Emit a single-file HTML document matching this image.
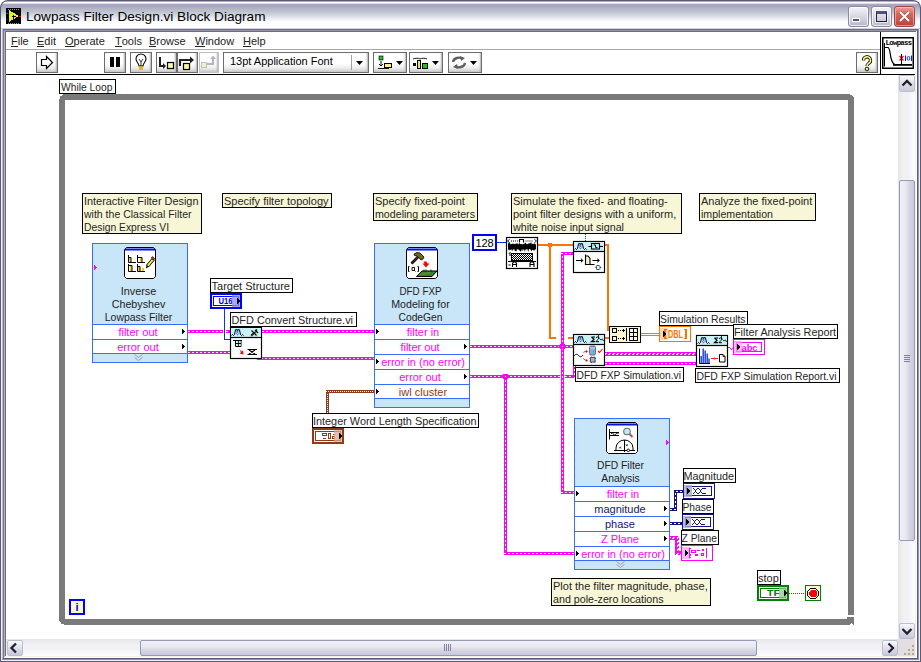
<!DOCTYPE html>
<html><head><meta charset="utf-8">
<style>
*{margin:0;padding:0;box-sizing:border-box}
html,body{width:921px;height:662px;overflow:hidden;background:#fff;font-family:"Liberation Sans",sans-serif}
.a{position:absolute}
#title{left:0;top:0;width:921px;height:28px;border-radius:8px 8px 0 0;border:1px solid #5a5a78;border-bottom:0;background:linear-gradient(to bottom,#b4acc4 0px,#b4acc4 1px,#ffffff 1px,#ffffff 2px,#dcdce6 2.5px,#b0a8c0 3.5px,#a8a4bc 4.5px,#a8a8c0 5.5px,#b0b0c4 7px,#b8bcc8 9px,#c0c4d0 11px,#ccd0d8 13px,#d8dce4 15px,#e8e8f0 17px,#f4f4f8 19px,#ffffff 21px,#ffffff 27px)}
.menu{top:35px;font-size:11px;color:#222;line-height:13px;white-space:nowrap}
.menu u{text-decoration:none;display:inline-block;border-bottom:1px solid #222;line-height:10px}
.tb{position:absolute;top:52px;height:21px;border:1px solid #6c6c6c;background:linear-gradient(to bottom,#fff 0,#fff 55%,#ececec 80%,#c8c8c8 100%);box-shadow:inset -2px 0 2px -1px #b0b0b0}
.sbtn{position:absolute;border:1px solid #b8c0d8;border-radius:2px;background:linear-gradient(to bottom,#fafafe 0,#e4e4ec 40%,#c8c8d8 100%)}
</style></head><body>
<div class="a" style="left:0;top:0;width:921px;height:662px;background:#fff"></div>
<div class="a" id="title"></div>
<!-- frame left -->
<div class="a" style="left:0;top:7px;width:1px;height:655px;background:#5a5a78"></div>
<div class="a" style="left:1px;top:28px;width:2px;height:633px;background:#f0f0f4"></div>
<div class="a" style="left:2px;top:28px;width:1px;height:632px;background:#b8b8c8"></div>
<div class="a" style="left:3px;top:29px;width:1px;height:630px;background:#7a7a98"></div>
<div class="a" style="left:4px;top:30px;width:1px;height:628px;background:#b0b0c4"></div>
<div class="a" style="left:5px;top:31px;width:1px;height:626px;background:#786c5c"></div>
<!-- frame right -->
<div class="a" style="left:920px;top:7px;width:1px;height:655px;background:#5a5a78"></div>
<div class="a" style="left:919px;top:28px;width:1px;height:633px;background:#f0f0f4"></div>
<div class="a" style="left:918px;top:28px;width:1px;height:632px;background:#9898b0"></div>
<div class="a" style="left:917px;top:29px;width:1px;height:630px;background:#5a5a78"></div>
<div class="a" style="left:916px;top:30px;width:1px;height:628px;background:#ffffff"></div>
<div class="a" style="left:915px;top:31px;width:1px;height:626px;background:#f4f0e8"></div>
<!-- frame top (below title) -->
<div class="a" style="left:1px;top:28px;width:919px;height:1px;background:#d0d0dc"></div>
<div class="a" style="left:3px;top:29px;width:915px;height:1px;background:#6c6c8c"></div>
<div class="a" style="left:4px;top:30px;width:913px;height:1px;background:#9494a8"></div>
<div class="a" style="left:5px;top:31px;width:911px;height:1px;background:#786c5c"></div>
<!-- frame bottom -->
<div class="a" style="left:0;top:661px;width:921px;height:1px;background:#5a5a78"></div>
<div class="a" style="left:1px;top:660px;width:919px;height:1px;background:#f0f0f4"></div>
<div class="a" style="left:2px;top:659px;width:917px;height:1px;background:#9090a8"></div>
<div class="a" style="left:3px;top:658px;width:915px;height:1px;background:#5a5a78"></div>
<div class="a" style="left:4px;top:657px;width:913px;height:1px;background:#ffffff"></div>
<div class="a" style="left:5px;top:656px;width:911px;height:1px;background:#f4f0e8"></div>

<!-- title icon + text -->
<svg class="a" style="left:6px;top:8px" width="16" height="16" viewBox="0 0 16 16" shape-rendering="crispEdges">
<rect x="0" y="0" width="15" height="16" fill="#000"/>
<path d="M2 1h11M2 15h11" stroke="#fff" stroke-width="0.6" stroke-dasharray="1 1"/>
<polygon points="3,2 13,8 3,14" fill="#f0f020"/>
<path d="M5.5 8.5h4M7.5 6.5v4" stroke="#000" stroke-width="1"/>
<rect x="0" y="5" width="2" height="1" fill="#f00"/><rect x="0" y="11" width="2" height="1" fill="#00f"/><rect x="13" y="8" width="2" height="1" fill="#f00"/>
</svg>
<div class="a" style="left:26px;top:9px;font-size:13.6px;line-height:16px;color:#000;letter-spacing:0;white-space:nowrap">Lowpass Filter Design.vi Block Diagram</div>
<!-- title buttons -->
<div class="a" style="left:848px;top:6px;width:21px;height:21px;border:1px solid #8a8aa4;border-radius:3px;background:linear-gradient(#f4f4fa,#e0e0ea 35%,#c8c8d8 75%,#b4b8cc);box-shadow:inset 0 0 0 1px rgba(255,255,255,0.7)"></div>
<div class="a" style="left:852px;top:18px;width:8px;height:4px;background:#50507a;border:1px solid #fff;box-sizing:border-box;outline:0"></div>
<div class="a" style="left:871px;top:6px;width:21px;height:21px;border:1px solid #8a8aa4;border-radius:3px;background:linear-gradient(#f4f4fa,#e0e0ea 35%,#c8c8d8 75%,#b4b8cc);box-shadow:inset 0 0 0 1px rgba(255,255,255,0.7)"></div>
<div class="a" style="left:876px;top:11px;width:11px;height:11px;border:1px solid #202030;border-top:3px solid #50507a;box-shadow:0 0 0 1px rgba(255,255,255,0.6)"></div>
<div class="a" style="left:894px;top:6px;width:21px;height:21px;border:1px solid #a04848;border-radius:3px;background:linear-gradient(#f0a098,#d86a60 35%,#c85048 75%,#b84038);box-shadow:inset 0 0 0 1px rgba(255,220,200,0.5)"></div>
<svg class="a" style="left:894px;top:6px" width="21" height="21"><path d="M6 6L15 15M15 6L6 15" stroke="#803030" stroke-width="3.2" opacity="0.5"/><path d="M6 6L15 15M15 6L6 15" stroke="#fff" stroke-width="2"/></svg>

<!-- menu -->
<div class="a menu" style="left:11px"><u>F</u>ile</div>
<div class="a menu" style="left:37px"><u>E</u>dit</div>
<div class="a menu" style="left:65px"><u>O</u>perate</div>
<div class="a menu" style="left:115px"><u>T</u>ools</div>
<div class="a menu" style="left:149px"><u>B</u>rowse</div>
<div class="a menu" style="left:195px"><u>W</u>indow</div>
<div class="a menu" style="left:243px"><u>H</u>elp</div>
<div class="a" style="left:6px;top:49px;width:874px;height:1px;background:#a8a8a8"></div>
<div class="a" style="left:880px;top:32px;width:1px;height:43px;background:#000"></div>
<div class="a" style="left:6px;top:74px;width:909px;height:1px;background:#000"></div>

<!-- toolbar -->
<div class="tb" style="left:36px;width:22px"></div>
<svg class="a" style="left:36px;top:52px" width="22" height="21"><path d="M5.5 7.5H10.5V4.5L16.5 10.5L10.5 16.5V13.5H5.5Z" fill="#fff" stroke="#000" stroke-width="1.2"/></svg>
<div class="tb" style="left:104px;width:22px"></div>
<div class="a" style="left:110px;top:57px;width:4px;height:10px;background:#000"></div>
<div class="a" style="left:116px;top:57px;width:4px;height:10px;background:#000"></div>
<div class="tb" style="left:130px;width:22px"></div>
<svg class="a" style="left:130px;top:52px" width="22" height="21"><path d="M9 14C9 11 6 10 6 7A5 5 0 0 1 16 7C16 10 13 11 13 14Z" fill="#fff" stroke="#000" stroke-width="1.1"/><path d="M9 7l2 3 2-3M11 10v4" fill="none" stroke="#000" stroke-width="0.8"/><path d="M9 15h4M9 17h4" stroke="#e0a000" stroke-width="1.3"/></svg>
<div class="tb" style="left:156px;width:21px"></div>
<svg class="a" style="left:156px;top:52px" width="21" height="21"><path d="M4 5V14H8" fill="none" stroke="#202020" stroke-width="2"/><path d="M7 11l3 3-3 3z" fill="#202020"/><rect x="11.5" y="10.5" width="6" height="6" fill="#f8f8a0" stroke="#000" stroke-width="1.2"/></svg>
<div class="tb" style="left:177px;width:21px"></div>
<svg class="a" style="left:177px;top:52px" width="21" height="21"><path d="M3 14V8H14" fill="none" stroke="#202020" stroke-width="2.2"/><path d="M13 4.5l4 3.5-4 3.5z" fill="#202020"/><rect x="6.5" y="11.5" width="6" height="6" fill="#f8f8a0" stroke="#000" stroke-width="1.2"/></svg>
<div class="tb" style="left:199px;width:20px;border-color:#c0c0c0"></div>
<svg class="a" style="left:199px;top:52px" width="20" height="21"><rect x="2.5" y="10.5" width="5" height="5" fill="#f0f0d0" stroke="#c0c0c0"/><path d="M8 12h6V6" fill="none" stroke="#b0b4c8" stroke-width="2"/><path d="M11 7l3-3.5 3 3.5z" fill="#b0b4c8"/></svg>
<div class="tb" style="left:223px;width:146px"></div>
<div class="a" style="left:230px;top:55px;font-size:11px;line-height:13px;color:#000;white-space:nowrap">13pt Application Font</div>
<div class="a" style="left:351px;top:55px;width:1px;height:15px;background:#a0a0a0"></div>
<svg class="a" style="left:353px;top:52px" width="14" height="21"><path d="M3 9h7l-3.5 4z" fill="#000"/></svg>
<div class="tb" style="left:373px;width:34px"></div>
<svg class="a" style="left:373px;top:52px" width="34" height="21"><rect x="6" y="4" width="4" height="4" fill="#20c020" stroke="#000" stroke-width="0.6"/><path d="M8 9v5M6 12l2 2 2-2M5 16.5h11" stroke="#000" stroke-width="0.9" fill="none" stroke-dasharray="0"/><rect x="11.5" y="11.5" width="7" height="4" fill="#f8f080" stroke="#000"/><path d="M23 9h7l-3.5 4z" fill="#000"/></svg>
<div class="tb" style="left:409px;width:34px"></div>
<svg class="a" style="left:409px;top:52px" width="34" height="21"><path d="M4 7c2-1 6-1 7 0c1-1 5-1 7 0" fill="none" stroke="#000" stroke-width="0.9"/><rect x="4" y="11" width="3" height="3" fill="#000"/><rect x="8.5" y="8.5" width="3" height="8" fill="#f0e060" stroke="#000"/><rect x="13.5" y="11.5" width="5" height="5" fill="#20c020" stroke="#000"/><path d="M23 9h7l-3.5 4z" fill="#000"/></svg>
<div class="tb" style="left:448px;width:34px"></div>
<svg class="a" style="left:448px;top:52px" width="34" height="21"><path d="M5 10a6 5 0 0 1 10-3M17 11a6 5 0 0 1-10 3" fill="none" stroke="#606060" stroke-width="2.4"/><path d="M12 4l5 2-4 3zM10 17l-5-2 4-3z" fill="#606060"/><path d="M22 9h7l-3.5 4z" fill="#000"/></svg>
<div class="tb" style="left:856px;width:22px"></div>
<svg class="a" style="left:856px;top:52px" width="22" height="21"><path d="M7.5 8.5a3.5 3.5 0 1 1 5 3c-1 .6-1.5 1-1.5 2.5" fill="none" stroke="#000" stroke-width="3.2"/><path d="M7.5 8.5a3.5 3.5 0 1 1 5 3c-1 .6-1.5 1-1.5 2.5" fill="none" stroke="#f8f080" stroke-width="1.6"/><circle cx="11" cy="17" r="1.8" fill="#f8f080" stroke="#000" stroke-width="0.9"/></svg>
<!-- VI icon -->
<svg class="a" style="left:882px;top:37px" width="32" height="32"><rect x="0.75" y="0.75" width="30.5" height="30.5" fill="#fff" stroke="#000" stroke-width="1.5"/><text x="3.5" y="8" font-size="6.5" font-weight="bold" font-family="Liberation Mono" letter-spacing="-0.6" textLength="26" lengthAdjust="spacingAndGlyphs">Lowpass</text><path d="M2.5 6V29.5" stroke="#000" stroke-width="1"/><path d="M2.5 10.5H6C8 11 8 17 9 21C10 25 11 27 13 27.5H30" fill="none" stroke="#000" stroke-width="1.2"/><path d="M11 28H30" stroke="#000" stroke-width="1.6"/><path d="M17.5 19L21.5 23.5M21.5 19L17.5 23.5" stroke="#f00" stroke-width="1.2"/><path d="M19.5 17V28" stroke="#000" stroke-width="1"/><path d="M23.5 18.5V24M29.5 18.5V24" stroke="#0020ff" stroke-width="1"/><rect x="25.3" y="19.5" width="2.4" height="3.6" rx="1" fill="none" stroke="#0020ff" stroke-width="0.9"/></svg>

<div class="a" style="left:6px;top:75px;width:892px;height:564px;overflow:hidden;background:#fff"><svg width="921" height="662" style="position:absolute;left:-6px;top:-75px" font-family="Liberation Sans" shape-rendering="crispEdges"><defs><pattern id="arrh" x="0" y="0" width="4" height="4" patternUnits="userSpaceOnUse"><rect width="4" height="4" fill="#ff00ff"/><rect x="1" y="1" width="2" height="1" fill="#fff"/><rect x="0" y="2" width="2" height="1" fill="#fff"/></pattern><pattern id="chk" x="0" y="0" width="2" height="2" patternUnits="userSpaceOnUse"><rect width="2" height="2" fill="#fff"/><rect width="1" height="1" fill="#000"/><rect x="1" y="1" width="1" height="1" fill="#000"/></pattern><pattern id="arrv" x="0" y="0" width="4" height="4" patternUnits="userSpaceOnUse"><rect width="4" height="4" fill="#ff00ff"/><rect x="1" y="1" width="1" height="2" fill="#fff"/><rect x="2" y="0" width="1" height="2" fill="#fff"/></pattern></defs>
<path d="M63 94H850V95H852V96H853V97H854V615H848V100H65V619H847V617H854V625H853L851.5 622.5L850 625H64V624H61V622H60V621H59V99H60V96H62V95H63Z" fill="#7a7a7a"/>
<rect x="59.5" y="79.5" width="56" height="14" fill="#fff" stroke="#000" stroke-width="1"/>
<text x="61" y="91" fill="#262626" text-anchor="start" font-size="11" font-weight="normal" textLength="51.5" lengthAdjust="spacingAndGlyphs">While Loop</text>
<rect x="69" y="599" width="16" height="16" fill="#0000ff"/>
<rect x="71" y="601" width="12" height="12" fill="#fcf8c8"/>
<text x="77" y="611" fill="#0000ff" text-anchor="middle" font-size="11" font-weight="bold" >i</text>
<rect x="82.5" y="193.5" width="119" height="40" fill="#f7f6d6" stroke="#000" stroke-width="1"/>
<text x="84" y="205" fill="#262626" text-anchor="start" font-size="11" font-weight="normal" textLength="114.5" lengthAdjust="spacingAndGlyphs">Interactive Filter Design</text>
<text x="84" y="218" fill="#262626" text-anchor="start" font-size="11" font-weight="normal" textLength="107.5" lengthAdjust="spacingAndGlyphs">with the Classical Filter</text>
<text x="84" y="231" fill="#262626" text-anchor="start" font-size="11" font-weight="normal" textLength="85" lengthAdjust="spacingAndGlyphs">Design Express VI</text>
<rect x="222.5" y="193.5" width="109" height="14" fill="#f7f6d6" stroke="#000" stroke-width="1"/>
<text x="224" y="205" fill="#262626" text-anchor="start" font-size="11" font-weight="normal" >Specify filter topology</text>
<rect x="373.5" y="193.5" width="104" height="27" fill="#f7f6d6" stroke="#000" stroke-width="1"/>
<text x="375" y="205" fill="#262626" text-anchor="start" font-size="11" font-weight="normal" >Specify fixed-point</text>
<text x="375" y="218" fill="#262626" text-anchor="start" font-size="11" font-weight="normal" textLength="100" lengthAdjust="spacingAndGlyphs">modeling parameters</text>
<rect x="511.5" y="193.5" width="170" height="40" fill="#f7f6d6" stroke="#000" stroke-width="1"/>
<text x="513" y="205" fill="#262626" text-anchor="start" font-size="11" font-weight="normal" >Simulate the fixed- and floating-</text>
<text x="513" y="218" fill="#262626" text-anchor="start" font-size="11" font-weight="normal" >point filter designs with a uniform,</text>
<text x="513" y="231" fill="#262626" text-anchor="start" font-size="11" font-weight="normal" textLength="111" lengthAdjust="spacingAndGlyphs">white noise input signal</text>
<rect x="699.5" y="193.5" width="116" height="27" fill="#f7f6d6" stroke="#000" stroke-width="1"/>
<text x="701" y="205" fill="#262626" text-anchor="start" font-size="11" font-weight="normal" >Analyze the fixed-point</text>
<text x="701" y="218" fill="#262626" text-anchor="start" font-size="11" font-weight="normal" textLength="72" lengthAdjust="spacingAndGlyphs">implementation</text>
<rect x="551.5" y="578.5" width="159" height="27" fill="#f7f6d6" stroke="#000" stroke-width="1"/>
<text x="553" y="590" fill="#262626" text-anchor="start" font-size="11" font-weight="normal" >Plot the filter magnitude, phase,</text>
<text x="553" y="603" fill="#262626" text-anchor="start" font-size="11" font-weight="normal" textLength="110.5" lengthAdjust="spacingAndGlyphs">and pole-zero locations</text>
<rect x="188" y="330" width="35" height="3" fill="#ff00ff"/>
<line x1="188" y1="331.5" x2="223" y2="331.5" stroke="#fff" stroke-width="1" stroke-dasharray="2 2" stroke-dashoffset="0"/>
<rect x="226" y="330" width="5" height="3" fill="#ff00ff"/>
<line x1="226" y1="331.5" x2="231" y2="331.5" stroke="#fff" stroke-width="1" stroke-dasharray="2 2" stroke-dashoffset="0"/>
<rect x="188" y="351" width="43" height="3" fill="#ff00ff"/>
<line x1="188" y1="352.5" x2="231" y2="352.5" stroke="#fff" stroke-width="1" stroke-dasharray="2 2" stroke-dashoffset="0"/>
<rect x="262" y="330" width="113" height="3" fill="#ff00ff"/>
<line x1="262" y1="331.5" x2="375" y2="331.5" stroke="#fff" stroke-width="1" stroke-dasharray="2 2" stroke-dashoffset="0"/>
<rect x="257" y="357" width="118" height="3" fill="#ff00ff"/>
<line x1="257" y1="358.5" x2="375" y2="358.5" stroke="#fff" stroke-width="1" stroke-dasharray="2 2" stroke-dashoffset="0"/>
<path d="M224.5 309V339.5H231" fill="none" stroke="#1030f0" stroke-width="1"/>
<rect x="326" y="390" width="3" height="23" fill="#8c3c1c"/>
<line x1="327.5" y1="390" x2="327.5" y2="413" stroke="#fff" stroke-width="1" stroke-dasharray="1 1" stroke-dashoffset="0"/>
<rect x="326" y="390" width="49" height="3" fill="#8c3c1c"/>
<line x1="326" y1="391.5" x2="375" y2="391.5" stroke="#fff" stroke-width="1" stroke-dasharray="1 1" stroke-dashoffset="0"/>
<rect x="470" y="345" width="104" height="3" fill="#ff00ff"/>
<line x1="470" y1="346.5" x2="574" y2="346.5" stroke="#fff" stroke-width="1" stroke-dasharray="2 2" stroke-dashoffset="0"/>
<rect x="561" y="252" width="3" height="242" fill="#ff00ff"/>
<line x1="562.5" y1="252" x2="562.5" y2="494" stroke="#fff" stroke-width="1" stroke-dasharray="2 2" stroke-dashoffset="0"/>
<rect x="561" y="252" width="13" height="3" fill="#ff00ff"/>
<line x1="561" y1="253.5" x2="574" y2="253.5" stroke="#fff" stroke-width="1" stroke-dasharray="2 2" stroke-dashoffset="0"/>
<rect x="561" y="491" width="14" height="3" fill="#ff00ff"/>
<line x1="561" y1="492.5" x2="575" y2="492.5" stroke="#fff" stroke-width="1" stroke-dasharray="2 2" stroke-dashoffset="0"/>
<rect x="470" y="375" width="90" height="3" fill="#ff00ff"/>
<line x1="470" y1="376.5" x2="560" y2="376.5" stroke="#fff" stroke-width="1" stroke-dasharray="2 2" stroke-dashoffset="0"/>
<rect x="565" y="375" width="11" height="3" fill="#ff00ff"/>
<line x1="565" y1="376.5" x2="576" y2="376.5" stroke="#fff" stroke-width="1" stroke-dasharray="2 2" stroke-dashoffset="0"/>
<rect x="573" y="365" width="3" height="13" fill="#ff00ff"/>
<line x1="574.5" y1="365" x2="574.5" y2="378" stroke="#fff" stroke-width="1" stroke-dasharray="2 2" stroke-dashoffset="0"/>
<rect x="504" y="376" width="3" height="179" fill="#ff00ff"/>
<line x1="505.5" y1="376" x2="505.5" y2="555" stroke="#fff" stroke-width="1" stroke-dasharray="2 2" stroke-dashoffset="0"/>
<rect x="504" y="552" width="71" height="3" fill="#ff00ff"/>
<line x1="504" y1="553.5" x2="575" y2="553.5" stroke="#fff" stroke-width="1" stroke-dasharray="2 2" stroke-dashoffset="0"/>
<circle cx="562.5" cy="346.5" r="3" fill="#ff00ff"/><circle cx="562.5" cy="346.5" r="1" fill="#fff"/>
<circle cx="505.5" cy="376.5" r="3" fill="#ff00ff"/><circle cx="505.5" cy="376.5" r="1" fill="#fff"/>
<line x1="497" y1="242.5" x2="507" y2="242.5" stroke="#1030f0"/>
<rect x="538" y="244" width="36" height="2" fill="#ff7400"/>
<rect x="549" y="244" width="2" height="95" fill="#ff7400"/>
<rect x="549" y="337" width="7" height="2" fill="#ff7400"/>
<rect x="568" y="337" width="6" height="2" fill="#ff7400"/>
<circle cx="550" cy="245" r="2.5" fill="#ff7400"/>
<rect x="605" y="244" width="4" height="2" fill="#ff7400"/>
<rect x="607" y="244" width="2" height="87" fill="#ff7400"/>
<rect x="607" y="329" width="3" height="2" fill="#ff7400"/>
<rect x="605" y="337" width="5" height="2" fill="#ff7400"/>
<rect x="641" y="333" width="18" height="1" fill="#ff7400"/>
<rect x="641" y="335" width="18" height="1" fill="#ff7400"/>
<rect x="605" y="352" width="92" height="4" fill="url(#arrh)"/>
<rect x="605" y="362" width="92" height="3" fill="#ff00ff"/>
<line x1="605" y1="363.5" x2="697" y2="363.5" stroke="#fff" stroke-width="1" stroke-dasharray="2 2" stroke-dashoffset="0"/>
<path d="M728 347.5h1.5c1 0 1 2 2 2s1-2 2-2" fill="none" stroke="#ff00ff"/>
<line x1="585.5" y1="234" x2="585.5" y2="241" stroke="#008000" stroke-dasharray="1 1"/>
<line x1="789" y1="593.5" x2="805" y2="593.5" stroke="#008000" stroke-dasharray="1 1"/>
<path d="M670 509.5H675.5V491.5H683" fill="none" stroke="#14147a" stroke-width="3"/>
<path d="M670 509.5H675.5V491.5H683" fill="none" stroke="#fff" stroke-width="1" stroke-dasharray="2 2"/>
<rect x="670" y="522" width="13" height="3" fill="#14147a"/>
<line x1="670" y1="523.5" x2="683" y2="523.5" stroke="#fff" stroke-width="1" stroke-dasharray="2 2" stroke-dashoffset="0"/>
<rect x="670" y="536" width="8" height="4" fill="url(#arrh)"/><rect x="675" y="536" width="4" height="19" fill="url(#arrv)"/><rect x="675" y="551" width="7" height="4" fill="url(#arrh)"/>
<rect x="92" y="243" width="96" height="120" fill="#c8e6f8"/>
<rect x="93" y="325" width="94" height="14" fill="#fff"/>
<rect x="93" y="340" width="94" height="13" fill="#fff"/>
<rect x="92.5" y="243.5" width="95" height="119" fill="none" stroke="#3a6cf4"/>
<line x1="92" y1="324.5" x2="188" y2="324.5" stroke="#3a6cf4"/>
<line x1="92" y1="339.5" x2="188" y2="339.5" stroke="#3a6cf4"/>
<line x1="92" y1="353.5" x2="188" y2="353.5" stroke="#3a6cf4"/>
<g transform="translate(124,247)" shape-rendering="geometricPrecision">
<path d="M2.5 0.5H29.5L31.5 2.5V29.5L29.5 31.5H2.5L0.5 29.5V2.5Z" fill="#fff" stroke="#000" stroke-width="1"/>
<rect x="1" y="1.5" width="30" height="2" fill="#0010e0"/>
<rect x="5" y="11" width="2" height="4" fill="#f8c428"/><path d="M4.5 8V15.5H12M4.5 10.5H7V15" fill="none" stroke="#000" stroke-width="1"/><rect x="16" y="11" width="2" height="4" fill="#f8c428"/><path d="M13.5 8V15.5H21M13.5 10.5H18V15" fill="none" stroke="#000" stroke-width="1"/><rect x="6" y="19" width="2" height="5" fill="#f8c428"/><path d="M4.5 17V24.5H12M4.5 18.5H8V24" fill="none" stroke="#000" stroke-width="1"/><rect x="14" y="20" width="2" height="4" fill="#f8c428"/><path d="M13.5 17V24.5H21M13.5 19.5H16V24" fill="none" stroke="#000" stroke-width="1"/><rect x="18" y="21" width="2" height="3" fill="#f8c428"/><path d="M22.5 18L28 11.5L30 13.5L24.5 20Z" fill="#e8e030" stroke="#000" stroke-width="0.9"/><path d="M27.2 10.8L28.6 9.6L30.8 11.8L29.6 13.2Z" fill="#f02828" stroke="#000" stroke-width="0.6"/><path d="M22.5 18L22 21.5L24.5 20Z" fill="#000"/>
</g>
<text x="138.5" y="295" fill="#222" text-anchor="middle" font-size="11" font-weight="normal" textLength="35.5" lengthAdjust="spacingAndGlyphs">Inverse</text>
<text x="138.5" y="308" fill="#222" text-anchor="middle" font-size="11" font-weight="normal" textLength="53.5" lengthAdjust="spacingAndGlyphs">Chebyshev</text>
<text x="138.5" y="321" fill="#222" text-anchor="middle" font-size="11" font-weight="normal" textLength="67.5" lengthAdjust="spacingAndGlyphs">Lowpass Filter</text>
<text x="138.0" y="336" fill="#ff00ff" text-anchor="middle" font-size="11" font-weight="normal" >filter out</text>
<polygon points="182,328.5 185,331.5 182,334.5" fill="#000"/>
<text x="138.0" y="351" fill="#ff00ff" text-anchor="middle" font-size="11" font-weight="normal" >error out</text>
<polygon points="182,343.5 185,346.5 182,349.5" fill="#000"/>
<path d="M134.5 354.5L138.5 357.5L142.5 354.5M134.5 357.5L138.5 360.5L142.5 357.5" fill="none" stroke="#98a0b0" stroke-width="1" shape-rendering="geometricPrecision"/>
<polygon points="94,264.5 97,267.5 94,270.5" fill="#ff00ff"/>
<rect x="374" y="243" width="96" height="165" fill="#c8e6f8"/>
<rect x="375" y="325" width="94" height="14" fill="#fff"/>
<rect x="375" y="340" width="94" height="14" fill="#fff"/>
<rect x="375" y="355" width="94" height="14" fill="#fff"/>
<rect x="375" y="370" width="94" height="14" fill="#fff"/>
<rect x="375" y="385" width="94" height="13" fill="#fff"/>
<rect x="374.5" y="243.5" width="95" height="164" fill="none" stroke="#3a6cf4"/>
<line x1="374" y1="324.5" x2="470" y2="324.5" stroke="#3a6cf4"/>
<line x1="374" y1="339.5" x2="470" y2="339.5" stroke="#3a6cf4"/>
<line x1="374" y1="354.5" x2="470" y2="354.5" stroke="#3a6cf4"/>
<line x1="374" y1="369.5" x2="470" y2="369.5" stroke="#3a6cf4"/>
<line x1="374" y1="384.5" x2="470" y2="384.5" stroke="#3a6cf4"/>
<line x1="374" y1="398.5" x2="470" y2="398.5" stroke="#3a6cf4"/>
<g transform="translate(406,247)" shape-rendering="geometricPrecision">
<path d="M2.5 0.5H29.5L31.5 2.5V29.5L29.5 31.5H2.5L0.5 29.5V2.5Z" fill="#fff" stroke="#000" stroke-width="1"/>
<rect x="1" y="1.5" width="30" height="2" fill="#0010e0"/>
<path d="M5.5 16.5L12.5 9.5" stroke="#000" stroke-width="2.6"/><path d="M5.5 16.5L12.5 9.5" stroke="#802020" stroke-width="1"/><path d="M8 7L11 5.5L14 6L18 10L17 12L15 13L13 11L11 9L8.5 8.5Z" fill="#6c6818" stroke="#000" stroke-width="0.8"/><path d="M3.5 19.5h-1v5h1M11.5 19.5h1v5h-1" fill="none" stroke="#000" stroke-width="1"/><path d="M6 20.5h2.5v3h-2.5zM8 23l1.5 1.5" fill="none" stroke="#000" stroke-width="0.9"/><path d="M17.5 14.5h3l1 2h2l-3.5 4l-3.5-4h2z" fill="#f00"/><path d="M10.5 29.5L16 24H31L26 29.5Z" fill="#2a8a2a" stroke="#000" stroke-width="1"/><path d="M14 27.5c2-1 3 0 5-1s3 0 5-1M17 25.5l2 2M22 25l2 2" fill="none" stroke="#b07020" stroke-width="0.9"/><path d="M18 22.5v1.5M20 22.5v1.5M25 22.5v1.5" stroke="#000" stroke-width="0.8"/>
</g>
<text x="420.5" y="295" fill="#222" text-anchor="middle" font-size="11" font-weight="normal" textLength="42" lengthAdjust="spacingAndGlyphs">DFD FXP</text>
<text x="420.5" y="308" fill="#222" text-anchor="middle" font-size="11" font-weight="normal" textLength="58.5" lengthAdjust="spacingAndGlyphs">Modeling for</text>
<text x="420.5" y="321" fill="#222" text-anchor="middle" font-size="11" font-weight="normal" textLength="44" lengthAdjust="spacingAndGlyphs">CodeGen</text>
<text x="423.0" y="336" fill="#ff00ff" text-anchor="middle" font-size="11" font-weight="normal" >filter in</text>
<polygon points="376,328.5 379,331.5 376,334.5" fill="#000"/>
<text x="420.0" y="351" fill="#ff00ff" text-anchor="middle" font-size="11" font-weight="normal" >filter out</text>
<polygon points="464,343.5 467,346.5 464,349.5" fill="#000"/>
<text x="423.0" y="366" fill="#ff00ff" text-anchor="middle" font-size="11" font-weight="normal" >error in (no error)</text>
<polygon points="376,358.5 379,361.5 376,364.5" fill="#000"/>
<text x="420.0" y="381" fill="#ff00ff" text-anchor="middle" font-size="11" font-weight="normal" >error out</text>
<polygon points="464,373.5 467,376.5 464,379.5" fill="#000"/>
<text x="423.0" y="396" fill="#8c3c1c" text-anchor="middle" font-size="11" font-weight="normal" >iwl cluster</text>
<polygon points="376,388.5 379,391.5 376,394.5" fill="#000"/>
<rect x="574" y="418" width="96" height="152" fill="#c8e6f8"/>
<rect x="575" y="487" width="94" height="14" fill="#fff"/>
<rect x="575" y="502" width="94" height="14" fill="#fff"/>
<rect x="575" y="517" width="94" height="14" fill="#fff"/>
<rect x="575" y="532" width="94" height="14" fill="#fff"/>
<rect x="575" y="547" width="94" height="13" fill="#fff"/>
<rect x="574.5" y="418.5" width="95" height="151" fill="none" stroke="#3a6cf4"/>
<line x1="574" y1="486.5" x2="670" y2="486.5" stroke="#3a6cf4"/>
<line x1="574" y1="501.5" x2="670" y2="501.5" stroke="#3a6cf4"/>
<line x1="574" y1="516.5" x2="670" y2="516.5" stroke="#3a6cf4"/>
<line x1="574" y1="531.5" x2="670" y2="531.5" stroke="#3a6cf4"/>
<line x1="574" y1="546.5" x2="670" y2="546.5" stroke="#3a6cf4"/>
<line x1="574" y1="560.5" x2="670" y2="560.5" stroke="#3a6cf4"/>
<g transform="translate(606,422)" shape-rendering="geometricPrecision">
<path d="M2.5 0.5H29.5L31.5 2.5V29.5L29.5 31.5H2.5L0.5 29.5V2.5Z" fill="#fff" stroke="#000" stroke-width="1"/>
<rect x="1" y="1.5" width="30" height="2" fill="#0010e0"/>
<path d="M3.5 7V17.5" stroke="#000" stroke-width="1"/><path d="M4 10.5H13M4 13.5H13" stroke="#000" stroke-width="1"/><path d="M5 12c1-1.5 2-1.5 2.5 0s1.5 1.5 2.5 0s1.5-1.5 2.5 0" fill="none" stroke="#000" stroke-width="0.9"/><circle cx="21" cy="9.5" r="3.3" fill="#b8f0f8" stroke="#707070" stroke-width="1.1"/><path d="M23.5 12L26.5 15" stroke="#c84848" stroke-width="2"/><path d="M8 28.5H29" stroke="#000" stroke-width="1"/><path d="M10 28.5V26A8.5 8 0 0 1 27 26V28.5" fill="none" stroke="#000" stroke-width="1"/><path d="M18.5 18V30" stroke="#000" stroke-width="1"/><circle cx="22.3" cy="28.3" r="1.3" fill="#fff" stroke="#000" stroke-width="0.9"/><path d="M13.3 24.8l1.6 1.6m0-1.6l-1.6 1.6M20 22.4l1.6 1.6m0-1.6l-1.6 1.6" stroke="#000" stroke-width="0.8"/>
</g>
<text x="620.5" y="469" fill="#222" text-anchor="middle" font-size="11" font-weight="normal" textLength="47" lengthAdjust="spacingAndGlyphs">DFD Filter</text>
<text x="620.5" y="482" fill="#222" text-anchor="middle" font-size="11" font-weight="normal" textLength="38.5" lengthAdjust="spacingAndGlyphs">Analysis</text>
<text x="623.0" y="498" fill="#ff00ff" text-anchor="middle" font-size="11" font-weight="normal" >filter in</text>
<polygon points="576,490.5 579,493.5 576,496.5" fill="#000"/>
<text x="620.0" y="513" fill="#14147a" text-anchor="middle" font-size="11" font-weight="normal" >magnitude</text>
<polygon points="664,505.5 667,508.5 664,511.5" fill="#000"/>
<text x="620.0" y="528" fill="#14147a" text-anchor="middle" font-size="11" font-weight="normal" >phase</text>
<polygon points="664,520.5 667,523.5 664,526.5" fill="#000"/>
<text x="620.0" y="543" fill="#ff00ff" text-anchor="middle" font-size="11" font-weight="normal" >Z Plane</text>
<polygon points="664,535.5 667,538.5 664,541.5" fill="#000"/>
<text x="623.0" y="558" fill="#ff00ff" text-anchor="middle" font-size="11" font-weight="normal" >error in (no error)</text>
<polygon points="576,550.5 579,553.5 576,556.5" fill="#000"/>
<path d="M616.5 561.5L620.5 564.5L624.5 561.5M616.5 564.5L620.5 567.5L624.5 564.5" fill="none" stroke="#98a0b0" stroke-width="1" shape-rendering="geometricPrecision"/>
<polygon points="666,439.5 669,442.5 666,445.5" fill="#ff00ff"/>
<g transform="translate(230,327)" shape-rendering="geometricPrecision">
<rect x="0.5" y="0.5" width="31" height="31" fill="#fff" stroke="#000" stroke-width="1.2"/>
<rect x="1" y="1" width="30" height="10" fill="#c8f2f6"/><line x1="1" y1="10.5" x2="31" y2="10.5" stroke="#000" stroke-width="1.2"/>
<path d="M1.5 8.5L2.5 7.5L3.5 8.5L4.5 7.5L5.5 3L6.5 2L7.5 3.5L8.5 2L9.5 3L10.5 7.5L11.5 8.5L12.5 7.5L13.5 8.5" fill="none" stroke="#000" stroke-width="1"/><path d="M6.2 4.5l1.3 1.3 1.3-1.3M6.2 6.5l1.3 1.3 1.3-1.3M6.5 3.5l1 1 1-1" stroke="#1838f0" stroke-width="0.9" fill="none"/><path d="M21.5 3.5l5 5M27 2.5l-1.5 1.5M21 8.5l2-2" stroke="#000" stroke-width="1.2"/><path d="M25 3l3 3M21.5 9l4-4" stroke="#000" stroke-width="1.3"/><path d="M21.3 9.2l2.5-2.5" stroke="#a04818" stroke-width="1"/><path d="M3 13.5H12M5.5 13.5V19.5H11V13.5M8.3 14V19.5M5.5 16.5H11" fill="none" stroke="#000" stroke-width="1"/><rect x="6.2" y="14.2" width="1.6" height="1.8" fill="#c0f0f0"/><rect x="9" y="14.2" width="1.6" height="1.8" fill="#c0f0f0"/><rect x="6.2" y="17" width="1.6" height="2" fill="#c0f0f0"/><rect x="9" y="17" width="1.6" height="2" fill="#c0f0f0"/><path d="M9 21.5L11.5 24.5L13 23.5L13.5 27.5L9.5 26.5L11 25.5Z" fill="#f00"/><path d="M17.5 22.5H27M17.5 27.5H27M19 23L25 27M25 23L19 27" fill="none" stroke="#000" stroke-width="1.1"/>
</g>
<g transform="translate(506,237)" shape-rendering="geometricPrecision">
<rect x="0.5" y="0.5" width="31" height="31" fill="#fff" stroke="#000" stroke-width="1.2"/>
<path d="M3.5 2.5l-2 1.5 2 1.5M28.5 2.5l2 1.5-2 1.5" stroke="#000" fill="none" stroke-width="0.9"/><path d="M5 4h7.5M19.5 4h7.5" stroke="#000" stroke-dasharray="1 1" stroke-width="1"/><path d="M13.5 5.5V2.5h4V5.5" fill="none" stroke="#000" stroke-width="1.1"/><polygon points="2.0,5.7 2.5,6.1 3.0,6.9 3.5,5.0 4.0,5.8 4.5,8.0 5.0,7.5 5.5,6.9 6.0,6.9 6.5,6.6 7.0,7.0 7.5,7.3 8.0,5.9 8.5,7.6 9.0,7.2 9.5,7.1 10.0,6.2 10.5,6.3 11.0,7.6 11.5,5.4 12.0,7.9 12.5,6.9 13.0,6.5 13.5,6.1 14.0,6.8 14.5,7.0 15.0,7.6 15.5,7.0 16.0,7.6 16.5,7.7 17.0,7.1 17.5,7.5 18.0,5.9 18.5,7.6 19.0,5.3 19.5,6.2 20.0,5.9 20.5,7.6 21.0,6.8 21.5,7.2 22.0,7.6 22.5,6.5 23.0,5.9 23.5,6.8 24.0,5.6 24.5,6.8 25.0,5.1 25.5,5.9 26.0,7.7 26.5,6.4 27.0,6.9 27.5,6.7 28.0,7.8 28.5,6.3 29.0,5.7 29.5,7.9 29.5,13.1 29.0,12.4 28.5,13.7 28.0,13.0 27.5,13.4 27.0,13.3 26.5,13.1 26.0,12.6 25.5,14.4 25.0,14.1 24.5,12.0 24.0,12.7 23.5,11.6 23.0,11.7 22.5,14.5 22.0,14.4 21.5,12.5 21.0,11.6 20.5,11.6 20.0,13.8 19.5,12.0 19.0,13.9 18.5,14.5 18.0,11.7 17.5,13.2 17.0,12.1 16.5,13.2 16.0,14.4 15.5,12.0 15.0,14.5 14.5,14.3 14.0,14.2 13.5,13.3 13.0,12.7 12.5,12.4 12.0,12.8 11.5,12.2 11.0,11.8 10.5,14.3 10.0,13.9 9.5,14.3 9.0,14.1 8.5,12.9 8.0,11.6 7.5,13.3 7.0,11.7 6.5,13.7 6.0,14.1 5.5,12.0 5.0,12.9 4.5,12.9 4.0,12.2 3.5,14.0 3.0,11.7 2.5,13.3 2.0,13.1" fill="#000"/><rect x="2" y="7.5" width="28" height="4.5" fill="#000"/><rect x="5.5" y="16.5" width="21" height="7" fill="url(#chk)" stroke="#000" shape-rendering="crispEdges"/><path d="M2 24.5H30" stroke="#000" stroke-width="1.1"/><path d="M3 16.5l1-1V19" fill="none" stroke="#000" stroke-width="1"/><path d="M2.5 28h2M6.5 30V26.5l1-1.5h2l1 1.5V30M6.5 27.5h4M24 30V26.5l1-1.5h2l1 1.5V30M24 27.5h4" fill="none" stroke="#000" stroke-width="1.1"/>
</g>
<g transform="translate(573,241)" shape-rendering="geometricPrecision">
<rect x="0.5" y="0.5" width="31" height="31" fill="#fff" stroke="#000" stroke-width="1.2"/>
<rect x="1" y="1" width="30" height="10" fill="#c8f2f6"/><line x1="1" y1="10.5" x2="31" y2="10.5" stroke="#000" stroke-width="1.2"/>
<path d="M1.5 8.5L2.5 7.5L3.5 8.5L4.5 7.5L5.5 3L6.5 2L7.5 3.5L8.5 2L9.5 3L10.5 7.5L11.5 8.5L12.5 7.5L13.5 8.5" fill="none" stroke="#000" stroke-width="1"/><path d="M6.2 4.5l1.3 1.3 1.3-1.3M6.2 6.5l1.3 1.3 1.3-1.3M6.5 3.5l1 1 1-1" stroke="#1838f0" stroke-width="0.9" fill="none"/><path d="M15.5 5.5h3M26.5 5.5h3.5" stroke="#000" stroke-width="1"/><rect x="18.5" y="2.5" width="8" height="5.5" fill="none" stroke="#000" stroke-width="1.1"/><path d="M20.5 4h2V6.5h2" fill="none" stroke="#000" stroke-width="0.9"/><path d="M12.5 13.5V23.5H17V17.5L15 15Z" fill="#f4f0c0"/><path d="M3 19.5h6M19.5 19.5h6" stroke="#000" stroke-width="1.1"/><path d="M8 17.5l2 2-2 2M24.5 17.5l2 2-2 2" fill="#000" stroke="#000" stroke-width="0.5"/><path d="M12.5 13.5V23.5H21.5M13 15H15L17 17.5V23" fill="none" stroke="#000" stroke-width="1.1"/><path d="M22 26.5l2-1.8v3.6zM28.5 26.5l-2-1.8v3.6z" fill="#2040f0"/><path d="M23.5 24.5h3M23.5 28.5h3" stroke="#2040f0" stroke-width="1"/>
</g>
<g transform="translate(573,334)" shape-rendering="geometricPrecision">
<rect x="0.5" y="0.5" width="31" height="31" fill="#fff" stroke="#000" stroke-width="1.2"/>
<rect x="1" y="1" width="30" height="10" fill="#c8f2f6"/><line x1="1" y1="10.5" x2="31" y2="10.5" stroke="#000" stroke-width="1.2"/>
<path d="M1.5 8.5L2.5 7.5L3.5 8.5L4.5 7.5L5.5 3L6.5 2L7.5 3.5L8.5 2L9.5 3L10.5 7.5L11.5 8.5L12.5 7.5L13.5 8.5" fill="none" stroke="#000" stroke-width="1"/><path d="M6.2 4.5l1.3 1.3 1.3-1.3M6.2 6.5l1.3 1.3 1.3-1.3M6.5 3.5l1 1 1-1" stroke="#1838f0" stroke-width="0.9" fill="none"/><path d="M18.5 3H22M18.5 3l2.5 2.3-2.5 2.4H22" fill="none" stroke="#000" stroke-width="1.2"/><path d="M23 4c0.5-1.5 3-1.5 3 0s-3 2.5-3 3.7H26" fill="none" stroke="#000" stroke-width="1"/><path d="M25.5 1V4M26.5 4.5l1.5 1.5 1.5-1 1 2" fill="none" stroke="#000" stroke-width="0.8"/><path d="M0.5 22.5c1.5-2 3-3 4.5-1.5s3 3 5 0" fill="none" stroke="#000" stroke-width="1"/><path d="M10.5 18.5c1-1 2-1 3-1M10.5 24.5c1 1 2 2 3 2" fill="none" stroke="#f00" stroke-width="1"/><path d="M13 16l2 1.5-2 1.5zM13 25l2 1.5-2 1.5z" fill="#f00"/><rect x="16.5" y="12" width="6" height="9" rx="1.5" fill="#90a8d8" stroke="#4050a0" stroke-width="0.8"/><path d="M17 13.5c1 1 4 1 5 0" fill="none" stroke="#e0e8ff" stroke-width="0.8"/><rect x="19.5" y="17" width="2" height="1.5" fill="#20e020"/><path d="M25 17l1.5 1.5 3-3.5" fill="none" stroke="#f00" stroke-width="1.1"/><rect x="17.5" y="23.5" width="4.5" height="4.5" fill="#b0b0b8" stroke="#505068" stroke-width="1"/><path d="M18.5 22.5v1M21 22.5v1M18.5 28v1M21 28v1M16.5 24.5h1M16.5 27h1M22 24.5h1M22 27h1" stroke="#505068" stroke-width="1"/>
</g>
<g transform="translate(696,335)" shape-rendering="geometricPrecision">
<rect x="0.5" y="0.5" width="31" height="31" fill="#fff" stroke="#000" stroke-width="1.2"/>
<rect x="1" y="1" width="30" height="10" fill="#c8f2f6"/><line x1="1" y1="10.5" x2="31" y2="10.5" stroke="#000" stroke-width="1.2"/>
<path d="M1.5 8.5L2.5 7.5L3.5 8.5L4.5 7.5L5.5 3L6.5 2L7.5 3.5L8.5 2L9.5 3L10.5 7.5L11.5 8.5L12.5 7.5L13.5 8.5" fill="none" stroke="#000" stroke-width="1"/><path d="M6.2 4.5l1.3 1.3 1.3-1.3M6.2 6.5l1.3 1.3 1.3-1.3M6.5 3.5l1 1 1-1" stroke="#1838f0" stroke-width="0.9" fill="none"/><path d="M18.5 3H22M18.5 3l2.5 2.3-2.5 2.4H22" fill="none" stroke="#000" stroke-width="1.2"/><path d="M23 4c0.5-1.5 3-1.5 3 0s-3 2.5-3 3.7H26" fill="none" stroke="#000" stroke-width="1"/><path d="M25.5 1V4M26.5 4.5l1.5 1.5 1.5-1 1 2" fill="none" stroke="#000" stroke-width="0.8"/><path d="M3.5 13.5V28.5H14" fill="none" stroke="#000" stroke-width="1"/><path d="M5.2 28V21M7.2 28V13.5M9.2 28V15.5M11.2 28V18.5M13 28V23.5" stroke="#2048e0" stroke-width="1.5"/><path d="M15 23.5h7" stroke="#f02020" stroke-width="1"/><circle cx="18.5" cy="23.5" r="1" fill="#f02020"/><path d="M23.5 19.5h3.5l2 2v5.5h-5.5z" fill="#fff" stroke="#000" stroke-width="1"/><path d="M27 19.5v2h2" fill="none" stroke="#000" stroke-width="0.8"/>
</g>
<rect x="609.5" y="326.5" width="31" height="16" fill="#f8f6d0" stroke="#000" stroke-width="1.2"/>
<rect x="612.5" y="328.5" width="4" height="4" fill="#f8f6d0" stroke="#000" stroke-width="1"/><rect x="612.5" y="336.5" width="4" height="4" fill="#f8f6d0" stroke="#000" stroke-width="1"/>
<path d="M618 330.5h1M620 330.5h1M618 338.5h1M620 338.5h1" stroke="#000"/><path d="M622 330.5h3M623.5 329v3M622 338.5h3M623.5 337v3" stroke="#000"/><path d="M627 328.5c-1 2-1 9 0 12" fill="none" stroke="#000" stroke-width="1"/><rect x="629.5" y="328.5" width="8" height="12" fill="#f8f6d0" stroke="#000" stroke-width="1.1"/><path d="M629 332.5h9M629 336.5h9M633.5 328v13" stroke="#000"/>
<rect x="210.5" y="278.5" width="82" height="14" fill="#fff" stroke="#000" stroke-width="1"/>
<text x="211.5" y="290" fill="#262626" text-anchor="start" font-size="11" font-weight="normal" textLength="78.5" lengthAdjust="spacingAndGlyphs">Target Structure</text>
<rect x="230.5" y="312.5" width="126" height="14" fill="#fff" stroke="#000" stroke-width="1"/>
<text x="231.5" y="324" fill="#262626" text-anchor="start" font-size="11" font-weight="normal" textLength="121.5" lengthAdjust="spacingAndGlyphs">DFD Convert Structure.vi</text>
<rect x="312.5" y="413.5" width="166" height="14" fill="#fff" stroke="#000" stroke-width="1"/>
<text x="313" y="425" fill="#262626" text-anchor="start" font-size="11" font-weight="normal" textLength="163.5" lengthAdjust="spacingAndGlyphs">Integer Word Length Specification</text>
<rect x="659.5" y="311.5" width="88" height="14" fill="#fff" stroke="#000" stroke-width="1"/>
<text x="660" y="323" fill="#262626" text-anchor="start" font-size="11" font-weight="normal" textLength="85.5" lengthAdjust="spacingAndGlyphs">Simulation Results</text>
<rect x="733.5" y="324.5" width="104" height="14" fill="#fff" stroke="#000" stroke-width="1"/>
<text x="734" y="336" fill="#262626" text-anchor="start" font-size="11" font-weight="normal" textLength="102" lengthAdjust="spacingAndGlyphs">Filter Analysis Report</text>
<rect x="575.5" y="367.5" width="108" height="14" fill="#fff" stroke="#000" stroke-width="1"/>
<text x="576.5" y="379" fill="#262626" text-anchor="start" font-size="11" font-weight="normal" textLength="104.5" lengthAdjust="spacingAndGlyphs">DFD FXP Simulation.vi</text>
<rect x="695.5" y="368.5" width="144" height="14" fill="#fff" stroke="#000" stroke-width="1"/>
<text x="696.5" y="380" fill="#262626" text-anchor="start" font-size="11" font-weight="normal" textLength="140" lengthAdjust="spacingAndGlyphs">DFD FXP Simulation Report.vi</text>
<rect x="683.5" y="468.5" width="52" height="14" fill="#fff" stroke="#000" stroke-width="1"/>
<text x="683.5" y="480" fill="#262626" text-anchor="start" font-size="11" font-weight="normal" textLength="50.5" lengthAdjust="spacingAndGlyphs">Magnitude</text>
<rect x="682.5" y="499.5" width="31" height="14" fill="#fff" stroke="#000" stroke-width="1"/>
<text x="682.5" y="511" fill="#262626" text-anchor="start" font-size="11" font-weight="normal" textLength="29" lengthAdjust="spacingAndGlyphs">Phase</text>
<rect x="681.5" y="530.5" width="37" height="14" fill="#fff" stroke="#000" stroke-width="1"/>
<text x="681.5" y="542" fill="#262626" text-anchor="start" font-size="11" font-weight="normal" textLength="35.5" lengthAdjust="spacingAndGlyphs">Z Plane</text>
<rect x="757.5" y="570.5" width="23" height="14" fill="#fff" stroke="#000" stroke-width="1"/>
<text x="758" y="582" fill="#262626" text-anchor="start" font-size="11" font-weight="normal" >stop</text>
<rect x="210" y="293" width="32" height="16" fill="#0000ff"/>
<rect x="212" y="295" width="28" height="12" fill="#fff"/>
<rect x="213.5" y="296.5" width="25" height="9" fill="#fff" stroke="#0000ff"/>
<text x="218.5" y="304" fill="#0000ff" text-anchor="start" font-size="9" font-weight="bold"  textLength="14" lengthAdjust="spacingAndGlyphs">U16</text>
<rect x="232" y="295" width="8" height="12" fill="#8890f0" opacity="0.75"/>
<polygon points="237,297.5 240.5,301 237,304.5" fill="#000"/>
<rect x="473" y="235" width="23" height="15" fill="#fff" stroke="#0000ff" stroke-width="2"/>
<text x="484.5" y="247" fill="#000" text-anchor="middle" font-size="11" font-weight="normal"  textLength="18">128</text>
<rect x="312" y="428" width="32" height="16" fill="#8c3c1c"/>
<rect x="314" y="430" width="28" height="12" fill="#fff"/>
<rect x="315.5" y="431.5" width="25" height="9" fill="#fff" stroke="#8c3c1c"/>
<path d="M322.5 433.5h4v2h-4zM323 438.5h3M328.5 433.5h2v5h-2zM332.5 434.5h2M332.5 436.5h2v2h-2z" fill="none" stroke="#8c3c1c" stroke-width="1"/>
<rect x="334" y="430" width="8" height="12" fill="#d8a898" opacity="0.75"/>
<polygon points="339,432.5 342.5,436 339,439.5" fill="#000"/>
<rect x="659.5" y="326.5" width="31" height="15" fill="#fff" stroke="#ff7400"/>
<rect x="660" y="328" width="8" height="12" fill="#f8d0a8" opacity="0.85"/>
<path d="M667 329.5h-2v9h2M684 329.5h2v9h-2" fill="none" stroke="#ff7400" stroke-width="1.4"/>
<text x="668" y="338" fill="#ff7400" text-anchor="start" font-size="10" font-weight="bold"  textLength="15" lengthAdjust="spacingAndGlyphs">DBL</text>
<polygon points="663,330.5 666.5,334 663,337.5" fill="#000"/>
<rect x="733.5" y="339.5" width="31" height="15" fill="#fff" stroke="#ff00ff"/>
<rect x="736.5" y="342.5" width="25" height="9" fill="none" stroke="#ff00ff"/>
<rect x="734" y="341" width="8" height="12" fill="#f0a0f0" opacity="0.75"/>
<polygon points="737,343.5 740.5,347 737,350.5" fill="#000"/>
<text x="749.5" y="351" fill="#ff00ff" text-anchor="middle" font-size="9" font-weight="bold"  textLength="16" lengthAdjust="spacingAndGlyphs">abc</text>
<rect x="683.5" y="483.5" width="31" height="15" fill="#fff" stroke="#14147a"/>
<rect x="686.5" y="486.5" width="25" height="9" fill="none" stroke="#14147a"/>
<rect x="684" y="485" width="8" height="12" fill="#a8a8d0" opacity="0.8"/>
<polygon points="687,487.5 690.5,491 687,494.5" fill="#000"/>
<path d="M693 488.5c2 0 3 5 5 5s3-5 5-5h3M693 493.5c2 0 3-5 5-5s3 5 5 5h3" fill="none" stroke="#14147a" stroke-width="1"/>
<rect x="682.5" y="514.5" width="31" height="15" fill="#fff" stroke="#14147a"/>
<rect x="685.5" y="517.5" width="25" height="9" fill="none" stroke="#14147a"/>
<rect x="683" y="516" width="8" height="12" fill="#a8a8d0" opacity="0.8"/>
<polygon points="686,518.5 689.5,522 686,525.5" fill="#000"/>
<path d="M692 519.5c2 0 3 5 5 5s3-5 5-5h3M692 524.5c2 0 3-5 5-5s3 5 5 5h3" fill="none" stroke="#14147a" stroke-width="1"/>
<rect x="681.5" y="545.5" width="31" height="15" fill="#fff" stroke="#ff00ff"/>
<rect x="682" y="547" width="8" height="12" fill="#f0a8f0" opacity="0.8"/>
<polygon points="685,549.5 688.5,553 685,556.5" fill="#000"/>
<path d="M690.5 548.5h-1v9h1M705.5 548.5h1v9h-1" fill="none" stroke="#ff00ff" stroke-width="1"/><rect x="691.5" y="550.5" width="4" height="2" fill="none" stroke="#ff00ff"/><rect x="695" y="554" width="3" height="2" fill="#ff00ff"/><rect x="697" y="550" width="3" height="1" fill="#ff00ff"/><rect x="702" y="549" width="2" height="2" fill="#ff00ff"/><rect x="701.5" y="553.5" width="2" height="2" fill="none" stroke="#ff00ff"/><rect x="689" y="554" width="2" height="2" fill="#ff00ff"/>
<rect x="757" y="585" width="32" height="16" fill="#008000"/>
<rect x="759" y="587" width="28" height="12" fill="#fff"/>
<rect x="760.5" y="588.5" width="25" height="9" fill="#fff" stroke="#008000"/>
<text x="767" y="596" fill="#008000" text-anchor="start" font-size="9" font-weight="bold"  textLength="13" lengthAdjust="spacingAndGlyphs">TF</text>
<rect x="779" y="587" width="8" height="12" fill="#90c890" opacity="0.75"/>
<polygon points="784,589.5 787.5,593 784,596.5" fill="#000"/>
<rect x="805.5" y="585.5" width="15" height="15" fill="#fcf8d0" stroke="#008000"/>
<polygon points="810.5,588.5 815.5,588.5 818.5,591.5 818.5,595.5 815.5,598.5 810.5,598.5 807.5,595.5 807.5,591.5" fill="#fff" stroke="#000"/>
<polygon points="811,590 815,590 817,592 817,595 815,597 811,597 809,595 809,592" fill="#f00"/></svg></div>

<!-- scrollbars -->
<div class="a" style="left:898px;top:75px;width:17px;height:564px;background:linear-gradient(to right,#e4e4ee,#f2f2f0 35%,#f0f0f8 60%,#fefefe)"></div>
<div class="sbtn" style="left:899px;top:75px;width:16px;height:17px"></div>
<svg class="a" style="left:899px;top:75px" width="16" height="17"><path d="M3.5 10.5L8 6L12.5 10.5" fill="none" stroke="#202030" stroke-width="2.3"/></svg>
<div class="sbtn" style="left:899px;top:180px;width:16px;height:361px;border-color:#9898b8;background:linear-gradient(to right,#f0f0fa,#e8e8ee 40%,#d4d4e2 70%,#c8c8dc)"></div>
<svg class="a" style="left:899px;top:354px" width="16" height="12"><path d="M5 1.5h6M5 3.5h6M5 5.5h6M5 7.5h6" stroke="#8080a0"/></svg>
<div class="sbtn" style="left:899px;top:623px;width:16px;height:16px"></div>
<svg class="a" style="left:899px;top:623px" width="16" height="16"><path d="M3.5 6L8 10.5L12.5 6" fill="none" stroke="#202030" stroke-width="2.3"/></svg>

<div class="a" style="left:6px;top:639px;width:892px;height:17px;background:linear-gradient(to bottom,#e4e4ee,#f2f2f0 35%,#f0f0f8 60%,#fefefe)"></div>
<div class="sbtn" style="left:7px;top:640px;width:16px;height:16px"></div>
<svg class="a" style="left:7px;top:640px" width="16" height="16"><path d="M9 3.5L4.5 8L9 12.5" fill="none" stroke="#202030" stroke-width="2.3"/></svg>
<div class="sbtn" style="left:140px;top:640px;width:617px;height:16px;border-color:#9898b8;background:linear-gradient(to bottom,#f0f0fa,#e8e8ee 40%,#d4d4e2 70%,#c8c8dc)"></div>
<svg class="a" style="left:443px;top:643px" width="12" height="10"><path d="M1.5 1v7M3.5 1v7M5.5 1v7M7.5 1v7" stroke="#8080a0"/></svg>
<div class="sbtn" style="left:882px;top:640px;width:16px;height:16px"></div>
<svg class="a" style="left:882px;top:640px" width="16" height="16"><path d="M6.5 3.5L11 8L6.5 12.5" fill="none" stroke="#202030" stroke-width="2.3"/></svg>
<div class="a" style="left:898px;top:639px;width:17px;height:17px;background:#e2dee2"></div>
<svg class="a" style="left:898px;top:639px" width="17" height="17" shape-rendering="crispEdges"><g fill="#b4ac84"><rect x="14" y="6" width="2" height="2"/><rect x="10" y="10" width="2" height="2"/><rect x="14" y="10" width="2" height="2"/><rect x="6" y="14" width="2" height="2"/><rect x="10" y="14" width="2" height="2"/><rect x="14" y="14" width="2" height="2"/></g></svg>
</body></html>
